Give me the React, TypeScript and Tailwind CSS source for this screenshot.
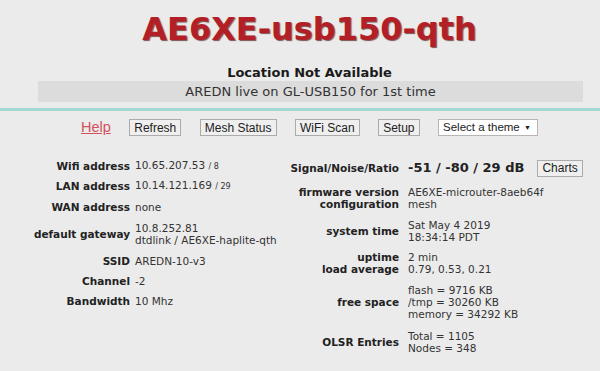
import React from "react";

const sans = "font-['DejaVu_Sans',Verdana,sans-serif]";
const arial = "font-['Liberation_Sans',Arial,sans-serif]";

function Btn({ label }: { label: string }) {
  return (
    <span
      className={`${arial} inline-flex items-center justify-center h-[17px] px-[4px] text-[12px] leading-none text-[#222] bg-[#efefef] border border-[#ababab]`}
    >
      {label}
    </span>
  );
}

function LeftRow({ label, h, children }: { label: string; h: string; children: React.ReactNode }) {
  return (
    <div className={`flex items-center ${h}`}>
      <div className="w-[130px] shrink-0 text-right font-bold text-[#222]">{label}</div>
      <div className="pl-[5px] whitespace-nowrap text-[#333]">{children}</div>
    </div>
  );
}

function RightRow({ label, className = "", children }: { label: React.ReactNode; className?: string; children: React.ReactNode }) {
  return (
    <div className={`flex items-center ${className}`}>
      <div className="w-[119px] shrink-0 text-right font-bold text-[#222]">{label}</div>
      <div className="pl-[9px] whitespace-nowrap text-[#333]">{children}</div>
    </div>
  );
}

export default function App() {
  return (
    <div className={`${sans} w-[600px] h-[371px] overflow-hidden bg-[#ebebeb]`}>
      {/* Header */}
      <div className="pl-[19px]">
        <div className="pt-[13px] text-center text-[32px] leading-8 font-bold text-[#b31f27] [text-shadow:1px_1px_1px_rgba(60,0,0,0.65)]">
          AE6XE-usb150-qth
        </div>
        <div className="mt-[21px] text-center text-[13px] leading-[14px] font-bold text-[#1a1a1a]">
          Location Not Available
        </div>
        <div className="mt-px ml-[19px] mr-[17px] h-[21px] bg-[#dcdcdc] text-center text-[13px] leading-[21px] text-[#333]">
          AREDN live on GL-USB150 for 1st time
        </div>
      </div>
      <div className="mt-[6px] h-[3px] bg-[#a3d8d3]" />

      {/* Nav */}
      <div className="mt-[8px] pl-[19px] h-[17px] flex items-center justify-center gap-[18.5px]">
        <span className={`${arial} text-[14.5px] leading-none text-[#d4505a] underline`}>Help</span>
        <Btn label="Refresh" />
        <Btn label="Mesh Status" />
        <Btn label="WiFi Scan" />
        <Btn label="Setup" />
        <span
          className={`${arial} w-[100px] h-[17px] flex items-center justify-between pl-[4px] pr-[6px] text-[11.5px] leading-none text-[#222] bg-white border border-[#b5b5b5]`}
        >
          Select a theme
          <span className="text-[7px]">▼</span>
        </span>
      </div>

      {/* Status */}
      <div className="mt-[20px] flex text-[10.5px] leading-[12px]">
        <div className="w-[280px] shrink-0">
          <LeftRow label="Wifi address" h="h-5">
            10.65.207.53 <span className="text-[8px]">/ 8</span>
          </LeftRow>
          <LeftRow label="LAN address" h="h-5">
            10.14.121.169 <span className="text-[8px]">/ 29</span>
          </LeftRow>
          <LeftRow label="WAN address" h="h-[21px]">
            none
          </LeftRow>
          <LeftRow label="default gateway" h="h-[33px]">
            10.8.252.81
            <br />
            dtdlink / AE6XE-haplite-qth
          </LeftRow>
          <LeftRow label="SSID" h="h-[21px]">
            AREDN-10-v3
          </LeftRow>
          <LeftRow label="Channel" h="h-5">
            -2
          </LeftRow>
          <LeftRow label="Bandwidth" h="h-5">
            10 Mhz
          </LeftRow>
        </div>

        <div className="mt-[2px] flex flex-col">
          <div className="flex items-center h-5">
            <div className="w-[119px] shrink-0 text-right font-bold text-[#222]">Signal/Noise/Ratio</div>
            <div className="pl-[9px] whitespace-nowrap text-[13px] font-bold text-[#222]">-51 / -80 / 29 dB</div>
            <div className="ml-[13px]">
              <Btn label="Charts" />
            </div>
          </div>
          <RightRow
            className="mt-2"
            label={
              <>
                firmware version
                <br />
                configuration
              </>
            }
          >
            AE6XE-microuter-8aeb64f
            <br />
            mesh
          </RightRow>
          <RightRow className="mt-[9px]" label="system time">
            Sat May 4 2019
            <br />
            18:34:14 PDT
          </RightRow>
          <RightRow
            className="mt-2"
            label={
              <>
                uptime
                <br />
                load average
              </>
            }
          >
            2 min
            <br />
            0.79, 0.53, 0.21
          </RightRow>
          <RightRow className="mt-[9px]" label="free space">
            flash = 9716 KB
            <br />
            /tmp = 30260 KB
            <br />
            memory = 34292 KB
          </RightRow>
          <RightRow className="mt-[10px]" label="OLSR Entries">
            Total = 1105
            <br />
            Nodes = 348
          </RightRow>
        </div>
      </div>
    </div>
  );
}
